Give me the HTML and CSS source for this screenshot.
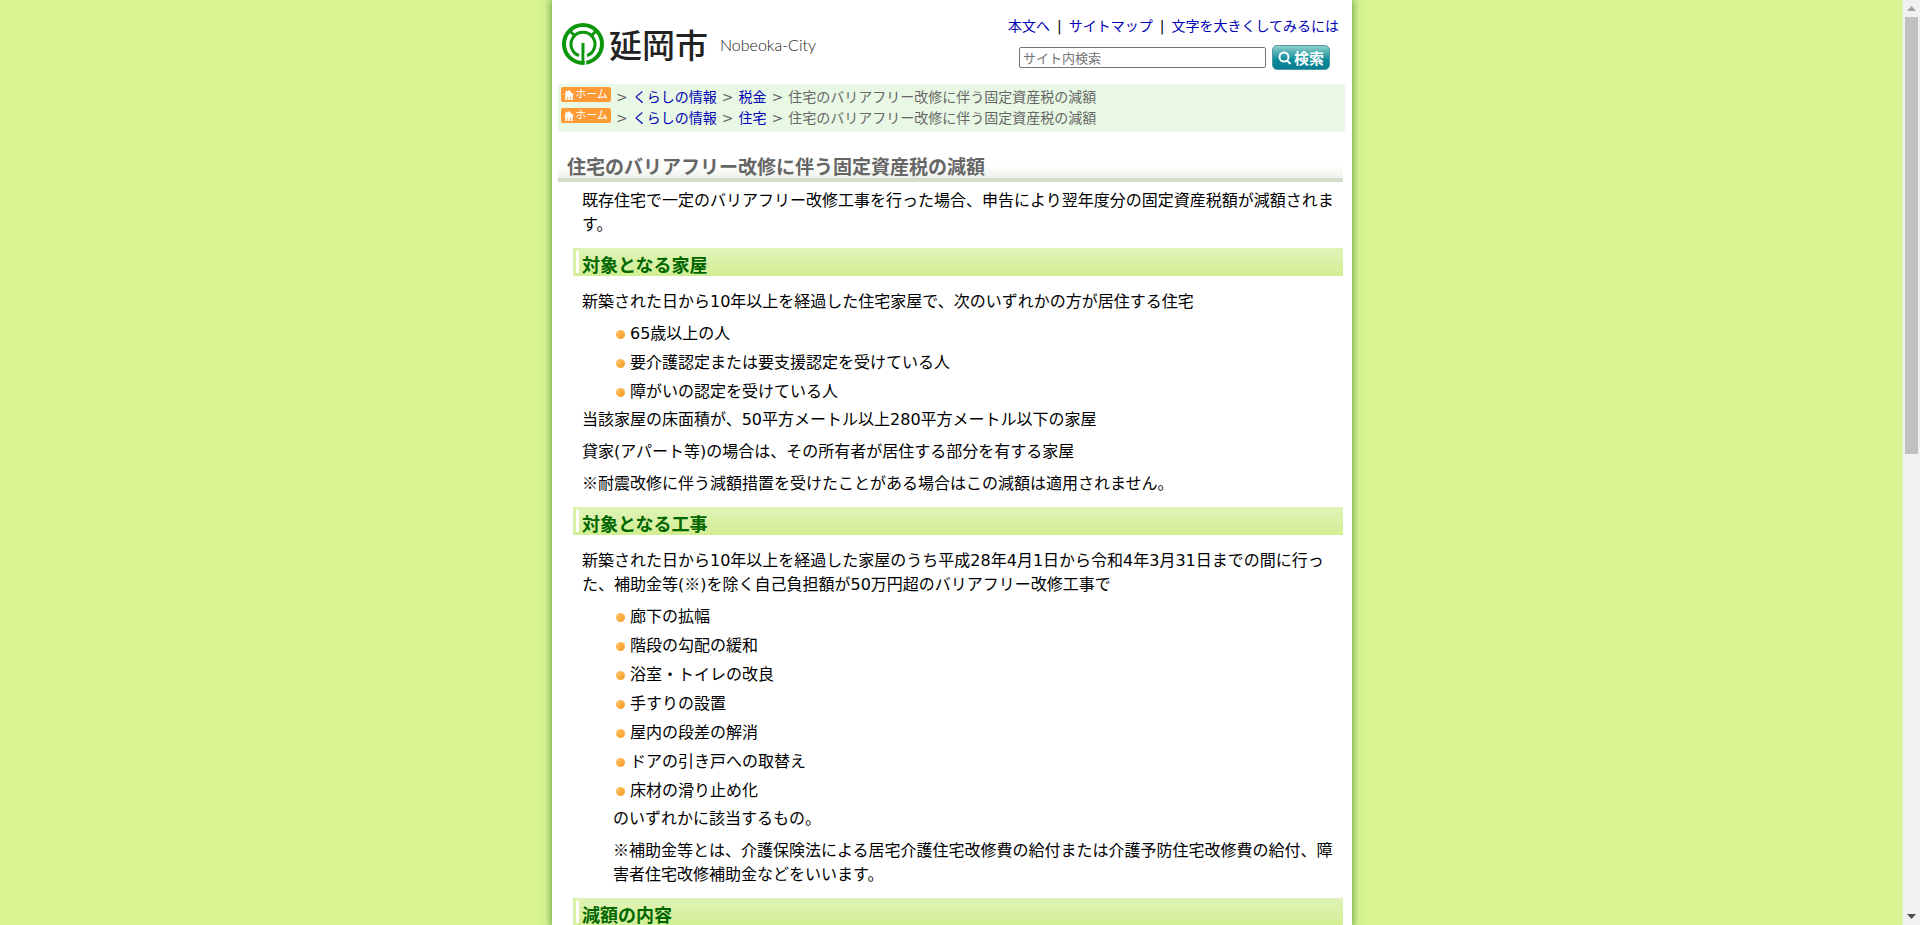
FILE: index.html
```html
<!DOCTYPE html>
<html lang="ja">
<head>
<meta charset="utf-8">
<title>住宅のバリアフリー改修に伴う固定資産税の減額 - 延岡市</title>
<link rel="stylesheet" href="styles.css">
</head>
<body>
<div class="window">
  <div class="viewport">
    <div class="page">
      <header class="header">
        <a class="brand" href="#" aria-label="延岡市">
          <svg class="brand-mark" viewBox="0 0 42 42" aria-hidden="true">
            <g fill="none" stroke="#0b960b">
              <circle cx="21" cy="21" r="19" stroke-width="4"/>
              <path d="M17 32.500A12 12 0 1 1 25 32.500" stroke-width="3"/>
              <path d="M8 8L13 13M34 8L29 13" stroke-width="3"/>
              <path d="M21 20V41" stroke-width="3"/>
            </g>
            <path d="M23.500 30V42" stroke="#fff" stroke-width="1.500"/>
          </svg>
          <span class="brand-name">延岡市</span>
          <span class="brand-latin">Nobeoka-City</span>
        </a>
        <div class="tools">
          <nav class="tool-links">
            <a href="#main">本文へ</a><span>|</span><a href="#">サイトマップ</a><span>|</span><a href="#">文字を大きくしてみるには</a>
          </nav>
          <form class="search">
            <input class="search-box" type="text" placeholder="サイト内検索" aria-label="サイト内検索">
            <button class="search-button" type="button">
              <svg viewBox="0 0 14 14" aria-hidden="true"><circle cx="6" cy="6" r="4.500"/><path d="M9 9.500L12.500 13"/></svg>検索
            </button>
          </form>
        </div>
      </header>

      <nav class="crumbs">
        <div class="crumb-row">
          <a class="home" href="#"><svg viewBox="0 0 12 12" aria-hidden="true"><path d="M6 0L12 6H10.500V12H8V8H7V12H5V8H4V12H1.500V6H0L2 4V1H4V2Z"/></svg>ホーム</a>
          <span>&gt;</span><a href="#">くらしの情報</a><span>&gt;</span><a href="#">税金</a><span>&gt;</span><span>住宅のバリアフリー改修に伴う固定資産税の減額</span>
        </div>
        <div class="crumb-row">
          <a class="home" href="#"><svg viewBox="0 0 12 12" aria-hidden="true"><path d="M6 0L12 6H10.500V12H8V8H7V12H5V8H4V12H1.500V6H0L2 4V1H4V2Z"/></svg>ホーム</a>
          <span>&gt;</span><a href="#">くらしの情報</a><span>&gt;</span><a href="#">住宅</a><span>&gt;</span><span>住宅のバリアフリー改修に伴う固定資産税の減額</span>
        </div>
      </nav>

      <main class="main" id="main">
        <h1>住宅のバリアフリー改修に伴う固定資産税の減額</h1>
        <div class="detail">
          <p>既存住宅で一定のバリアフリー改修工事を行った場合、申告により翌年度分の固定資産税額が減額されます。</p>

          <h2>対象となる家屋</h2>
          <p>新築された日から10年以上を経過した住宅家屋で、次のいずれかの方が居住する住宅</p>
          <ul>
            <li>65歳以上の人</li>
            <li>要介護認定または要支援認定を受けている人</li>
            <li>障がいの認定を受けている人</li>
          </ul>
          <p>当該家屋の床面積が、50平方メートル以上280平方メートル以下の家屋</p>
          <p>貸家(アパート等)の場合は、その所有者が居住する部分を有する家屋</p>
          <p><span class="mark">※</span>耐震改修に伴う減額措置を受けたことがある場合はこの減額は適用されません。</p>

          <h2>対象となる工事</h2>
          <p>新築された日から10年以上を経過した家屋のうち平成28年4月1日から令和4年3月31日までの間に行った、補助金等(<span class="mark">※</span>)を除く自己負担額が50万円超のバリアフリー改修工事で</p>
          <ul>
            <li>廊下の拡幅</li>
            <li>階段の勾配の緩和</li>
            <li>浴室・トイレの改良</li>
            <li>手すりの設置</li>
            <li>屋内の段差の解消</li>
            <li>ドアの引き戸への取替え</li>
            <li>床材の滑り止め化</li>
          </ul>
          <p class="inset">のいずれかに該当するもの。</p>
          <p class="inset"><span class="mark">※</span>補助金等とは、介護保険法による居宅介護住宅改修費の給付または介護予防住宅改修費の給付、障害者住宅改修補助金などをいいます。</p>

          <h2>減額の内容</h2>
        </div>
      </main>
    </div>
  </div>
  <div class="scrollbar" aria-hidden="true">
    <svg class="arrow" viewBox="0 0 17 17"><path d="M4 11L8.500 6L13 11Z" fill="#a3a3a3"/></svg>
    <div class="track"><div class="thumb"></div></div>
    <svg class="arrow" viewBox="0 0 17 17"><path d="M4 6H13L8.500 11Z" fill="#505050"/></svg>
  </div>
</div>
</body>
</html>
```
FILE: styles.css
```css
* { box-sizing: border-box; }

body {
  margin: 0;
  background: #d8f493;
  color: #000;
  font: 16px/24px "DejaVu Sans", "Noto Sans CJK JP", sans-serif;
}

a { color: #0000b4; text-decoration: none; }

.window {
  display: flex;
  height: 100vh;
  overflow: hidden;
}

.viewport {
  flex: 1;
  overflow: hidden;
  padding-left: 3px;
  border-right: 2px solid #dbf5ac;
}

.page {
  max-width: 800px;
  min-height: 100%;
  margin: 0 auto;
  padding: 0 7px 0 6px;
  background: #fff;
  box-shadow: 0 0 8px 1px #5f9c3c;
}

/* Header */
.header {
  display: flex;
  justify-content: space-between;
  height: 84px;
}

.brand {
  display: flex;
  align-items: center;
  padding: 4px 0 0 4px;
  color: #222;
  font-family: "Noto Sans CJK JP", sans-serif;
}

.brand-mark { width: 42px; height: 42px; }

.brand-name {
  margin-left: 5px;
  font-size: 33px;
  font-weight: 500;
  line-height: 42px;
}

.brand-latin {
  margin: 2px 0 0 12px;
  font: 300 16px/24px Lato, sans-serif;
}

.tools { padding: 14px 6px 0 0; }

.tool-links {
  display: flex;
  justify-content: flex-end;
  gap: 7px;
  font-size: 14px;
}

.search {
  display: flex;
  align-items: center;
  justify-content: flex-end;
  gap: 6px;
  padding: 7px 9px 0 0;
}

.search-box {
  width: 247px;
  height: 21px;
  padding: 0 3px;
  border: 1px solid #767676;
  border-radius: 2px;
  font: 13px/18px "Noto Sans CJK JP", sans-serif;
}

.search-box::placeholder { color: #757575; }

.search-button {
  display: flex;
  align-items: center;
  gap: 2px;
  width: 58px;
  height: 25px;
  padding: 0 5px;
  border: 1px solid #4e9aa6;
  border-radius: 5px;
  background: linear-gradient(#8fd0c9, #0a8c9c 60%, #087c92);
  color: #fff;
  font: bold 15px/20px "Noto Sans CJK JP", sans-serif;
  white-space: nowrap;
}

.search-button svg {
  flex: none;
  width: 14px;
  height: 14px;
  fill: none;
  stroke: #fff;
  stroke-width: 2;
}

/* Breadcrumbs */
.crumbs {
  padding: 3px;
  background: #e8f8e4;
  color: #666;
  font-size: 14px;
  line-height: 21px;
}

.crumb-row {
  display: flex;
  gap: 5px;
}

.home {
  display: flex;
  align-items: center;
  justify-content: center;
  gap: 1px;
  width: 50px;
  height: 15px;
  border-radius: 2px;
  background: #ff9a35;
  color: #fff;
  font-size: 11px;
  line-height: 15px;
}

.home svg {
  width: 10px;
  height: 10px;
  fill: #fff;
}

/* Article */
.main { padding: 22px 2px 0 0; }

h1, h2 { font-family: "Noto Sans CJK JP", sans-serif; }

h1 {
  margin: 0;
  padding: 0 9px;
  border-bottom: 4px solid #d3dcca;
  background: linear-gradient(#fff 50%, #eef1ea);
  color: #666;
  font-size: 19px;
  line-height: 24px;
}

.detail { padding: 7px 0 0 15px; }

h2 {
  margin: 11px 0 14px;
  padding: 4px 9px 0 6px;
  border-left: 3px solid #d9f0a5;
  background: linear-gradient(#fff, #fff) 0 3px / 3px 22px no-repeat, linear-gradient(#e0f3b8, #d2ee93);
  color: #060;
  font-size: 18px;
  line-height: 24px;
}

p { margin: 0 8px 8px 9px; }

p.inset { margin-left: 40px; }

.mark {
  font-family: "Noto Sans CJK JP", sans-serif;
  line-height: 16px;
}

ul {
  margin: 0 8px 4px 43px;
  padding: 0;
  list-style: none;
}

li {
  display: flex;
  align-items: center;
  gap: 5px;
  margin-bottom: 5px;
}

li:last-child { margin-bottom: 0; }

li::before {
  content: "";
  width: 9px;
  height: 9px;
  border-radius: 50%;
  background: linear-gradient(135deg, #ffc46a, #f79a20);
}

/* Scrollbar */
.scrollbar {
  display: flex;
  flex-direction: column;
  width: 17px;
  background: #f1f1f1;
}

.arrow { width: 17px; height: 17px; }

.track { flex: 1; padding: 0 2px; }

.thumb { height: 49%; background: #c1c1c1; }
```
